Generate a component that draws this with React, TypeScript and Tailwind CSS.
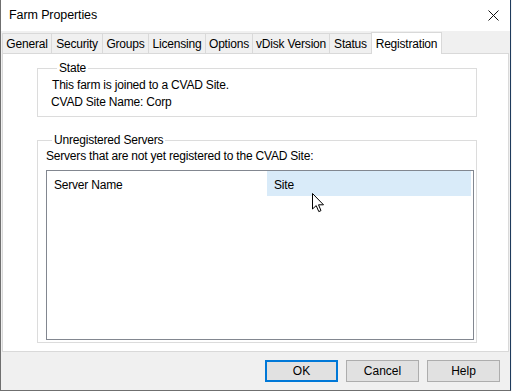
import type React from "react"

const tabs = [
  { label: "General", w: "w-[49px]" },
  { label: "Security", w: "w-[51px]" },
  { label: "Groups", w: "w-[46px]" },
  { label: "Licensing", w: "w-[57px]" },
  { label: "Options", w: "w-[47px]" },
  { label: "vDisk Version", w: "w-[77px]" },
  { label: "Status", w: "w-[42px]" },
]

const Cursor: React.FC = () => (
  <svg width="13" height="20" viewBox="0 0 13 20" className="absolute left-[312px] top-[193px]">
    <path
      d="M0.5 0.5 L0.5 16 L4.2 12.6 L6.8 18.6 L9 17.6 L6.5 11.8 L11.5 11.8 Z"
      fill="white"
      stroke="black"
      strokeWidth="1"
      strokeLinejoin="miter"
    />
  </svg>
)

const App: React.FC = () => {
  return (
    <div
      className="relative w-[512px] h-[391px] bg-[#f3f3f3] overflow-hidden text-[12px] text-black"
      style={{ fontFamily: '"Liberation Sans", Arial, sans-serif' }}
    >
      <div className="flex flex-col w-[511px] h-[391px] border-l border-b border-l-[#6f6f6f] border-b-[#6f6f6f] border-r border-r-[#1e3a5c] bg-[#f0f0f0]">
        {/* title bar */}
        <div className="h-[31px] shrink-0 bg-white flex items-center justify-between pl-[8px] pr-[11px]">
          <span className="text-[12.5px] tracking-[-0.1px]">Farm Properties</span>
          <svg width="11" height="11" viewBox="0 0 11 11">
            <path d="M0.5 0.5 L10.5 10.5 M10.5 0.5 L0.5 10.5" stroke="#111" strokeWidth="1" />
          </svg>
        </div>

        {/* tabs */}
        <div className="flex items-end h-[22px] pl-[1px] shrink-0">
          {tabs.map((t) => (
            <div
              key={t.label}
              className={`${t.w} h-[20px] border-t border-l border-[#d9d9d9] bg-[#f0f0f0] flex items-center justify-center tracking-[-0.2px]`}
            >
              {t.label}
            </div>
          ))}
          <div className="w-[71px] h-[22px] border border-b-0 border-[#d9d9d9] bg-white flex items-start justify-center pt-[2px] tracking-[-0.2px] relative z-10 mb-[-1px]">
            Registration
          </div>
        </div>

        {/* tab panel */}
        <div className="ml-[1px] mr-[1px] h-[299px] shrink-0 bg-white border border-[#d9d9d9] pl-[34px] pr-[31px] pt-[7px]">
          <fieldset className="border border-[#dcdcdc] h-[56px] px-[13px] pb-0">
            <legend className="ml-[6px] px-[2px] leading-[14px] tracking-[-0.2px]">State</legend>
            <div className="leading-[17px] tracking-[-0.2px] mt-[2px]">
              <div className="pl-[1px]">This farm is joined to a CVAD Site.</div>
              <div>CVAD Site Name: Corp</div>
            </div>
          </fieldset>

          <fieldset className="mt-[16px] border border-[#dcdcdc] h-[210px] pl-[8px] pr-[2px] pb-[2px] flex flex-col">
            <legend className="ml-[6px] px-[2px] leading-[14px] tracking-[-0.2px]">Unregistered Servers</legend>
            <div className="leading-[17px] tracking-[-0.2px] mt-[1px]">
              Servers that are not yet registered to the CVAD Site:
            </div>
            <div className="mt-[5px] flex-1 border border-[#828790] bg-white">
              <div className="flex h-[25px] items-center">
                <div className="w-[220px] pl-[7px] pt-[2px] tracking-[-0.2px]">Server Name</div>
                <div className="w-[204px] h-[25px] bg-[#d9ebf9] pl-[7px] pt-[2px] flex items-center tracking-[-0.2px]">Site</div>
              </div>
            </div>
          </fieldset>
        </div>

        {/* buttons */}
        <div className="flex justify-end gap-[8px] pr-[10px] pt-[8px]">
          <button className="w-[73px] h-[22px] border-2 border-[#0078d7] bg-[#e1e1e1] flex items-center justify-center">
            OK
          </button>
          <button className="w-[73px] h-[22px] border border-[#adadad] bg-[#e1e1e1] flex items-center justify-center">
            Cancel
          </button>
          <button className="w-[73px] h-[22px] border border-[#adadad] bg-[#e1e1e1] flex items-center justify-center">
            Help
          </button>
        </div>
      </div>
      <Cursor />
    </div>
  )
}

export default App
